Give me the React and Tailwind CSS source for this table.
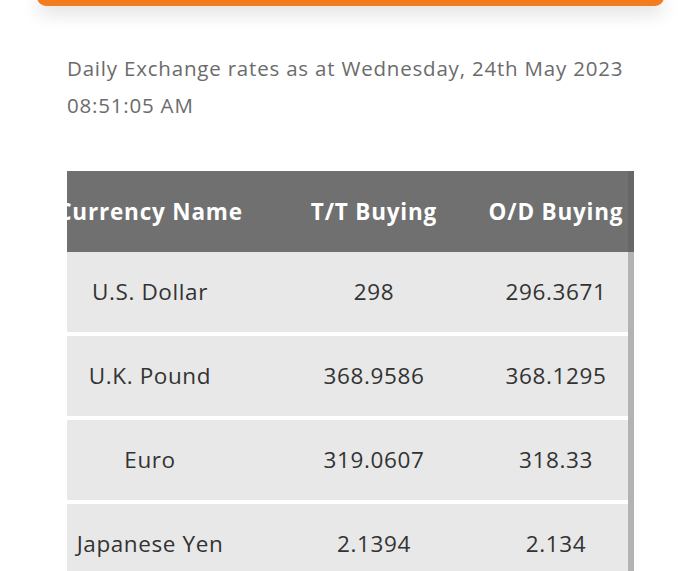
import React from 'react';

const rates = [
    { name: 'U.S. Dollar', tt: '298', od: '296.3671' },
    { name: 'U.K. Pound', tt: '368.9586', od: '368.1295' },
    { name: 'Euro', tt: '319.0607', od: '318.33' },
    { name: 'Japanese Yen', tt: '2.1394', od: '2.134' },
];

const App = () => {
    return (
        <div className="min-h-screen bg-white font-['Open_Sans','Liberation_Sans',sans-serif] overflow-hidden">
            {/* Orange header bar, mostly scrolled out of view */}
            <div className="ml-[37px] w-[627px] h-[18px] -mt-[12px] rounded-[10px] bg-[#f47c20] shadow-[0_8px_18px_rgba(0,0,0,0.12)]" />

            <p className="mt-[44px] ml-[67px] w-[600px] text-[20.5px] tracking-[0.8px] leading-[37px] text-[#6b6b6b]">
                Daily Exchange rates as at Wednesday, 24th May 2023 08:51:05 AM
            </p>

            {/* Rates table (horizontally scrolled a little) */}
            <div className="mt-[47px] ml-[67px] w-[567px] overflow-hidden">
                <div className="h-[81px] bg-[#707070] border-r-[6px] border-[#676767] overflow-hidden">
                    <div className="-ml-[31px] grid grid-cols-[228px_220px_144px] h-full items-center text-white font-bold text-[22.5px] tracking-[0.8px]">
                        <div className="text-center whitespace-nowrap">Currency Name</div>
                        <div className="text-center whitespace-nowrap">T/T Buying</div>
                        <div className="text-center whitespace-nowrap">O/D Buying</div>
                    </div>
                </div>

                <div className="border-r-[6px] border-[#b3b3b3]">
                    {rates.map((r) => (
                        <div key={r.name} className="h-[84px] border-b-[4px] border-white overflow-hidden">
                            <div className="-ml-[31px] grid grid-cols-[228px_220px_144px] h-full items-center bg-[#e8e8e8] text-[#333333] font-medium text-[22.5px] tracking-[0.6px]">
                                <div className="text-center whitespace-nowrap">{r.name}</div>
                                <div className="text-center whitespace-nowrap">{r.tt}</div>
                                <div className="text-center whitespace-nowrap">{r.od}</div>
                            </div>
                        </div>
                    ))}
                </div>
            </div>
        </div>
    );
};

export default App;
